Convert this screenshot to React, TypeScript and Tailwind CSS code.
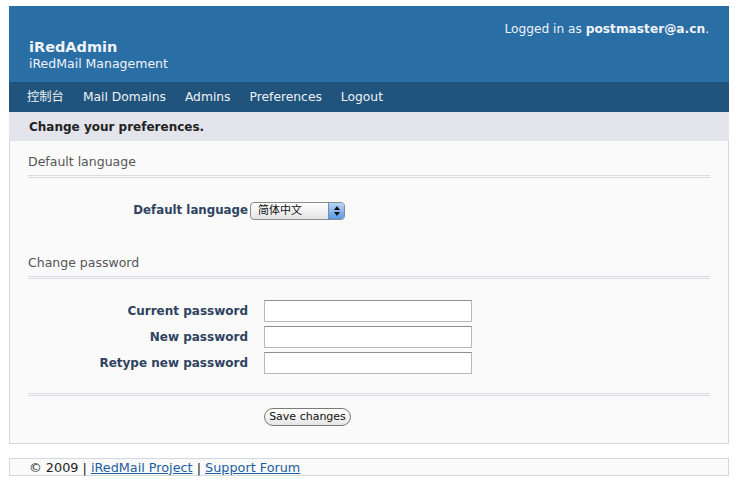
import React from "react";

const font = { fontFamily: '"DejaVu Sans", "Noto Sans CJK SC", sans-serif' };

function DoubleLine() {
  return <div className="h-[3px] border-t border-b border-[#d9dbdf] mr-[18px]" />;
}

function PwRow({ label }: { label: string }) {
  return (
    <div className="flex items-center h-[22px]">
      <div className="w-[220px] text-right text-[12px] font-bold text-[#2f4360]">{label}</div>
      <div className="ml-[16px] w-[208px] h-[22px] bg-white border border-[#b9b9b9] border-t-[#8f8f8f]" />
    </div>
  );
}

export default function App() {
  return (
    <div className="bg-white min-h-[484px] w-[740px] pt-[6px] px-[9px]" style={font}>
      <div className="w-[720px]">
        {/* header */}
        <div className="h-[76px] bg-[#2a6ea6] flex justify-between text-[#f0f3f7]">
          <div className="pl-[20px] pt-[32px]">
            <div className="text-[14.5px] font-bold leading-[18px]">iRedAdmin</div>
            <div className="text-[12.5px] leading-[16px] mt-[0px]">iRedMail Management</div>
          </div>
          <div className="pr-[20px] pt-[15px] text-[12.2px] leading-[16px]">
            Logged in as <span className="font-bold">postmaster@a.cn</span>.
          </div>
        </div>
        {/* nav */}
        <div className="h-[30px] bg-[#21547c] flex items-center gap-[19px] pl-[18px] text-[12.3px] text-[#eef2f6]">
          <span>控制台</span>
          <span>Mail Domains</span>
          <span>Admins</span>
          <span>Preferences</span>
          <span>Logout</span>
        </div>
        {/* title */}
        <div className="h-[29px] bg-[#e3e4ec] flex items-center pl-[20px] text-[12px] font-bold text-[#222]">
          Change your preferences.
        </div>
        {/* panel */}
        <div className="h-[303px] bg-[#fafafa] border border-t-0 border-[#d3d9e2] pl-[18px] pt-[13px]">
          <div className="text-[12.5px] text-[#555] leading-[16px]">Default language</div>
          <div className="mt-[5px]">
            <DoubleLine />
          </div>
          <div className="flex items-center mt-[24px] h-[18px]">
            <div className="w-[220px] text-right text-[11.8px] font-bold text-[#2f4360]">Default language</div>
            <div className="ml-[2px] w-[95px] h-[18px] rounded-[4px] border border-[#8a8a8a] flex overflow-hidden bg-gradient-to-b from-white to-[#e4e4e4]">
              <div className="flex-1 pl-[7px] text-[11px] leading-[16px] text-[#111]">简体中文</div>
              <div className="w-[16px] bg-gradient-to-b from-[#b9d6f5] to-[#5a98e0] border-l border-[#6d8fbe] flex flex-col items-center justify-center gap-[2px]">
                <svg width="6" height="4" viewBox="0 0 6 4"><path d="M0 4 L3 0 L6 4 Z" fill="#111" /></svg>
                <svg width="6" height="4" viewBox="0 0 6 4"><path d="M0 0 L3 4 L6 0 Z" fill="#111" /></svg>
              </div>
            </div>
          </div>
          <div className="text-[12.5px] text-[#555] leading-[16px] mt-[35px]">Change password</div>
          <div className="mt-[5px]">
            <DoubleLine />
          </div>
          <div className="mt-[21px] flex flex-col gap-[4px]">
            <PwRow label="Current password" />
            <PwRow label="New password" />
            <PwRow label="Retype new password" />
          </div>
          <div className="mt-[19px]">
            <DoubleLine />
          </div>
          <div className="mt-[12px] pl-[236px]">
            <div className="w-[87px] h-[18px] rounded-full border border-[#7a7a7a] bg-gradient-to-b from-white to-[#e6e6e6] text-[11px] leading-[16px] text-center text-[#111]">
              Save changes
            </div>
          </div>
        </div>
        {/* footer */}
        <div className="mt-[14px] h-[18px] border border-[#d3d9e2] bg-[#fafafa] pl-[19px] text-[12.8px] leading-[17px] text-[#222]">
          © 2009 | <span className="text-[#1d5ea0] underline">iRedMail Project</span> |{" "}
          <span className="text-[#1d5ea0] underline">Support Forum</span>
        </div>
      </div>
    </div>
  );
}
